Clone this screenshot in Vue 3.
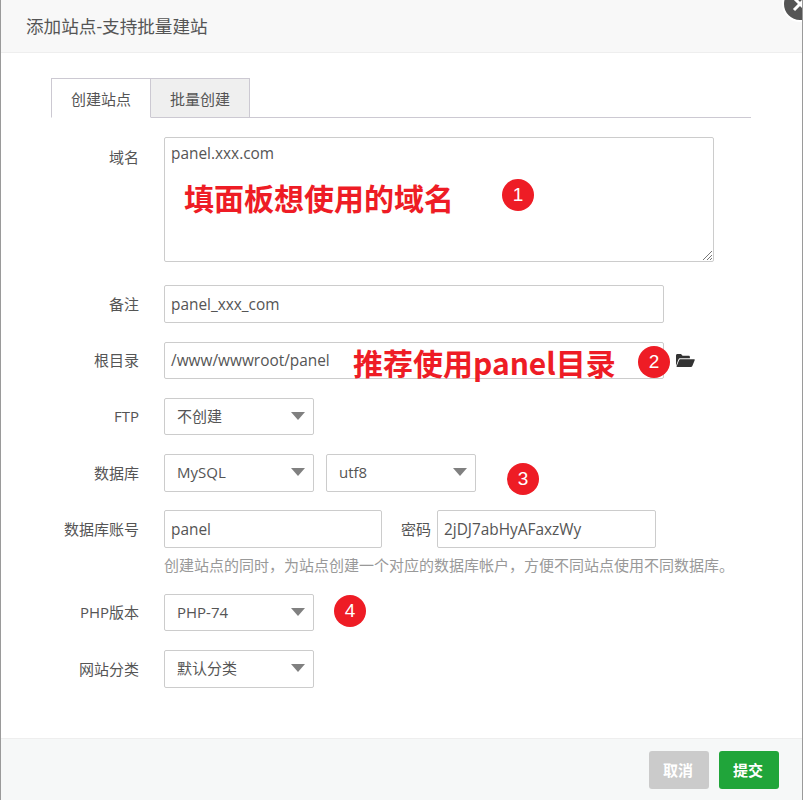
<script setup>
</script>

<template>
  <div class="page">
    <div class="close"><svg width="22" height="22" viewBox="0 0 22 22"><path d="M5 5l12 12M17 5L5 17" stroke="#fff" stroke-width="3" fill="none"/></svg></div>
    <header class="head">添加站点-支持批量建站</header>
    <main class="body">
      <div class="tabs">
        <div class="tab active">创建站点</div>
        <div class="tab">批量创建</div>
      </div>
      <div class="row first">
        <label class="lab">域名</label>
        <div class="textarea">panel.xxx.com
          <svg class="grip" width="10" height="10" viewBox="0 0 10 10"><path d="M1 10L10 1M5 10l5-5M8 10l2-2" stroke="#777" stroke-width="1" fill="none"/></svg>
        </div>
      </div>
      <div class="row r2">
        <label class="lab">备注</label>
        <div class="input w500">panel_xxx_com</div>
      </div>
      <div class="row r3">
        <label class="lab">根目录</label>
        <div class="input w500 h37">/www/wwwroot/panel</div>
        <svg class="folder" width="20" height="15" viewBox="0 0 20 15"><path d="M1 13V2.5C1 1.7 1.6 1 2.4 1H6l1.6 1.8h6c.8 0 1.3.5 1.3 1.3V5.2H5.2c-.9 0-1.4.4-1.8 1.2L1 13z" fill="#333"/><path d="M5.2 6.3H19c.6 0 .9.4.7 1l-2.5 6c-.2.5-.7.8-1.2.8H2.2c-.5 0-.8-.4-.6-.8l2.5-6c.2-.6.6-1 1.1-1z" fill="#333"/></svg>
      </div>
      <div class="row r4">
        <label class="lab">FTP</label>
        <div class="select h37">不创建<i class="caret"></i></div>
      </div>
      <div class="row r5">
        <label class="lab">数据库</label>
        <div class="select">MySQL<i class="caret"></i></div>
        <div class="select gap12">utf8<i class="caret"></i></div>
      </div>
      <div class="row r6">
        <label class="lab">数据库账号</label>
        <div class="input w218">panel</div>
        <span class="pwlab">密码</span>
        <div class="input w219">2jDJ7abHyAFaxzWy</div>
      </div>
      <p class="help">创建站点的同时，为站点创建一个对应的数据库帐户，方便不同站点使用不同数据库。</p>
      <div class="row r7">
        <label class="lab">PHP版本</label>
        <div class="select h37">PHP-74<i class="caret"></i></div>
      </div>
      <div class="row r8">
        <label class="lab">网站分类</label>
        <div class="select">默认分类<i class="caret"></i></div>
      </div>
    </main>
    <footer class="foot">
      <button class="btn gray">取消</button>
      <button class="btn green">提交</button>
    </footer>

    <div class="note n1">填面板想使用的域名</div>
    <div class="note n2">推荐使用panel目录</div>
    <div class="dot d1">1</div>
    <div class="dot d2">2</div>
    <div class="dot d3">3</div>
    <div class="dot d4">4</div>
  </div>
</template>

<style>
html, body { margin: 0; background: #fff; }
</style>

<style scoped>
.page {
  position: relative;
  width: 803px;
  height: 800px;
  overflow: hidden;
  box-sizing: border-box;
  border-left: 1px solid #9a9a9a;
  border-right: 1px solid #9a9a9a;
  display: flex;
  flex-direction: column;
  font-family: "Open Sans", "Noto Sans CJK SC", sans-serif;
  font-size: 15px;
  color: #555;
  background: #fff;
}
.close {
  position: absolute;
  left: 781px;
  top: -14px;
  width: 32px;
  height: 32px;
  border-radius: 50%;
  background: #555;
  border: 2px solid #fff;
  box-sizing: content-box;
  display: flex;
  align-items: center;
  justify-content: center;
}
.head {
  height: 53px;
  box-sizing: border-box;
  background: #f8f8f8;
  border-bottom: 1px solid #eee;
  padding-left: 25px;
  font-size: 17.6px;
  line-height: 53px;
  color: #555;
}
.body {
  flex: 1;
  padding: 25px 51px 0 50px;
  min-height: 0;
}
.tabs {
  display: flex;
  height: 40px;
  box-sizing: border-box;
  border-bottom: 1px solid #ccc9d2;
}
.tab {
  width: 99px;
  height: 40px;
  box-sizing: border-box;
  border: 1px solid #ccc9d2;
  border-left: 0;
  background: #efefef;
  text-align: center;
  line-height: 41px;
  font-size: 15px;
  color: #555;
}
.tab.active {
  width: 100px;
  border-left: 1px solid #ccc9d2;
  border-bottom-color: #fff;
  background: #fff;
}
.row { display: flex; align-items: center; }
.lab {
  width: 88px;
  flex: none;
  margin-right: 25px;
  padding-bottom: 2px;
  text-align: right;
  white-space: nowrap;
  color: #555;
}
.first { align-items: flex-start; margin-top: 19px; }
.first .lab { padding-top: 10px; padding-bottom: 0; line-height: 20px; }
.textarea {
  position: relative;
  width: 550px;
  height: 125px;
  box-sizing: border-box;
  border: 1px solid #ccc;
  border-radius: 2px;
  padding: 6px 6px;
  font-size: 15.4px;
  line-height: 20px;
}
.grip { position: absolute; right: 1px; bottom: 1px; }
.input, .select {
  height: 38px;
  box-sizing: border-box;
  border: 1px solid #ccc;
  border-radius: 2px;
  line-height: 37px;
  padding-left: 6px;
  font-size: 15.4px;
  color: #555;
  white-space: nowrap;
}
.h37 { height: 37px; line-height: 36px; }
.w500 { width: 500px; }
.w218 { width: 218px; }
.w219 { width: 219px; }
.select {
  position: relative;
  width: 150px;
  padding-left: 12px;
  font-size: 15px;
  line-height: 35px;
}
.select.h37 { line-height: 34px; }
.caret {
  position: absolute;
  right: 8px;
  top: 13px;
  width: 0;
  height: 0;
  border-left: 7.5px solid transparent;
  border-right: 7.5px solid transparent;
  border-top: 8px solid #808080;
}
.gap12 { margin-left: 12px; }
.r2 { margin-top: 23px; }
.r3 { margin-top: 19px; }
.r4 { margin-top: 19px; }
.r5 { margin-top: 19px; }
.r6 { margin-top: 18px; }
.r7 { margin-top: 19px; }
.r8 { margin-top: 19px; }
.folder { margin-left: 11px; flex: none; }
.pwlab { width: 55px; text-align: right; padding-right: 6px; padding-bottom: 2px; box-sizing: border-box; }
.help {
  margin: 7px 0 0 113px;
  height: 20px;
  line-height: 20px;
  font-size: 15px;
  color: #999;
  white-space: nowrap;
}
.foot {
  height: 62px;
  box-sizing: border-box;
  background: #f6f8f8;
  border-top: 1px solid #eee;
  display: flex;
  justify-content: flex-end;
  gap: 10px;
  padding: 12px 23px 0 0;
}
.btn {
  width: 60px;
  height: 38px;
  border: 0;
  border-radius: 3px;
  color: #fff;
  font-family: inherit;
  font-size: 15px;
  font-weight: 700;
  padding: 0 2px 2px 0;
}
.gray { background: #cbcbcb; }
.green { background: #20a53a; }
.note {
  position: absolute;
  color: #ee1c25;
  font-weight: 700;
  font-size: 30px;
  line-height: 40px;
  white-space: nowrap;
  font-family: "Noto Sans CJK SC", sans-serif;
}
.n1 { left: 183px; top: 177px; }
.n2 { left: 352px; top: 342px; }
.dot {
  position: absolute;
  width: 32px;
  height: 32px;
  border-radius: 50%;
  background: #ee1c25;
  color: #fff;
  text-align: center;
  line-height: 32px;
  font-size: 19px;
  font-family: "Liberation Sans", sans-serif;
}
.d1 { left: 501px; top: 179px; }
.d2 { left: 637px; top: 346px; }
.d3 { left: 506px; top: 463px; }
.d4 { left: 333px; top: 595px; }
</style>
